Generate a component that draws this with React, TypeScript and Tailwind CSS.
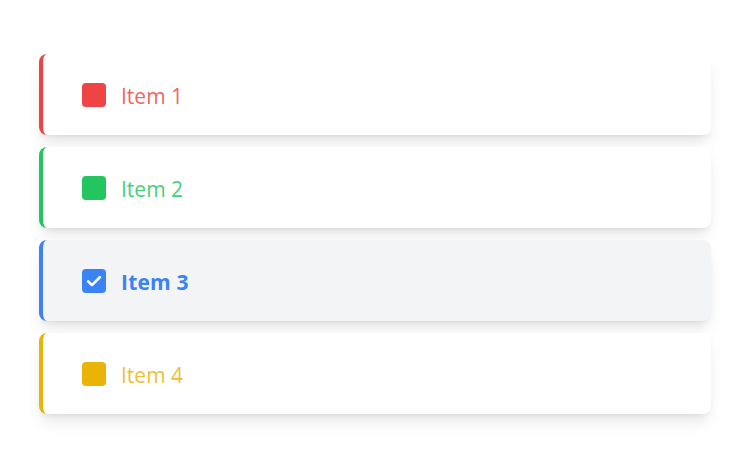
import React from "react";

const items = [
  { label: "Item 1", border: "border-[#ef4444]", box: "bg-[#ef4444]", text: "text-[#ef4444]/85", checked: false },
  { label: "Item 2", border: "border-[#22c55e]", box: "bg-[#22c55e]", text: "text-[#22c55e]/85", checked: false },
  { label: "Item 3", border: "border-[#3b82f6]", box: "bg-[#3b82f6]", text: "text-[#3b82f6]", checked: true },
  { label: "Item 4", border: "border-[#eab308]", box: "bg-[#eab308]", text: "text-[#eab308]/85", checked: false },
];

export default function App() {
  return (
    <div
      className="w-[750px] h-[469px] bg-white px-[39px] pt-[54px]"
      style={{ fontFamily: '"Open Sans", "Noto Sans", sans-serif' }}
    >
      <div className="flex flex-col gap-3">
        {items.map((it) => (
          <div
            key={it.label}
            className={`flex h-[81px] items-center gap-[15px] rounded-lg border-l-4 pl-[39px] shadow-lg ${it.border} ${
              it.checked ? "bg-[#f3f4f6]" : "bg-white"
            }`}
          >
            <div className={`flex h-6 w-6 items-center justify-center rounded ${it.box}`}>
              {it.checked && (
                <svg viewBox="0 0 24 24" className="h-5 w-5" fill="none" stroke="white" strokeWidth={3.2} strokeLinecap="round" strokeLinejoin="round">
                  <path d="M5 12.5l4.5 4.5L19 7.5" />
                </svg>
              )}
            </div>
            <span className={`text-[21px] leading-7 pt-[2px] ${it.text} ${it.checked ? "font-bold tracking-[0.2px]" : ""}`}>{it.label}</span>
          </div>
        ))}
      </div>
    </div>
  );
}
